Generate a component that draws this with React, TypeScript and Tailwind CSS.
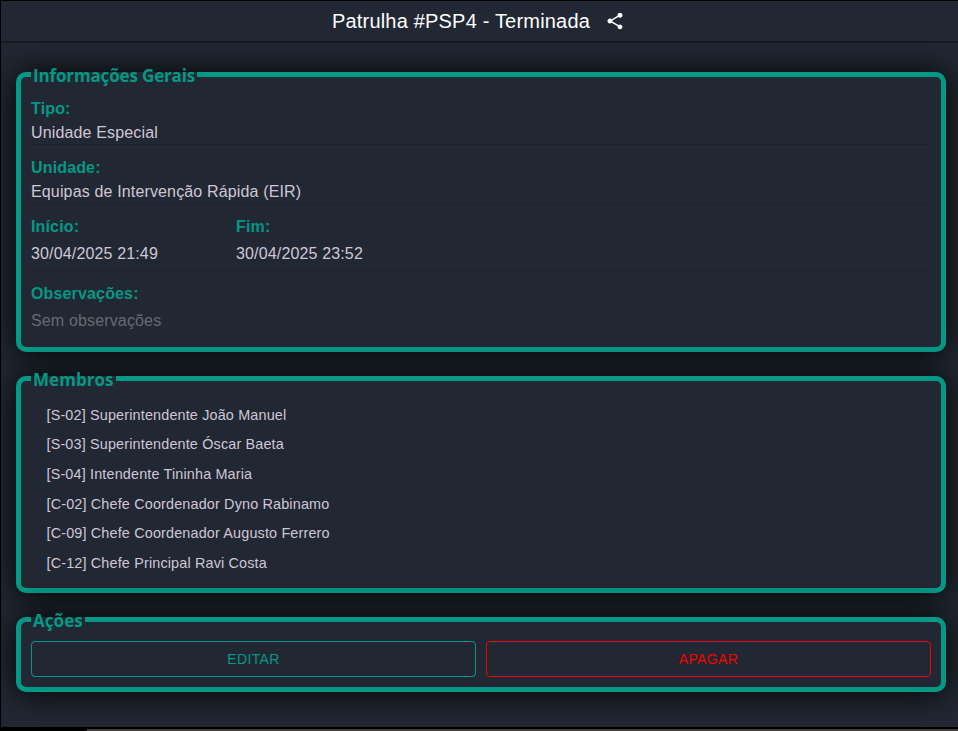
import type { ReactNode } from "react";

const members = [
  "[S-02] Superintendente João Manuel",
  "[S-03] Superintendente Óscar Baeta",
  "[S-04] Intendente Tininha Maria",
  "[C-02] Chefe Coordenador Dyno Rabinamo",
  "[C-09] Chefe Coordenador Augusto Ferrero",
  "[C-12] Chefe Principal Ravi Costa",
];

type PanelProps = { title: string; height: string; tracking: string; children: ReactNode };

function Panel({ title, height, tracking, children }: PanelProps) {
  return (
    <fieldset
      className={`${height} min-w-0 rounded-[10px] border-[5px] border-[#049985] bg-[#212833] px-[10px] shadow-[0_1px_32px_rgba(0,0,0,1)]`}
    >
      <legend
        className={`${tracking} h-[25px] px-[2px] font-['Open_Sans',sans-serif] text-[17px] leading-[28px] font-bold whitespace-nowrap text-[#049985]`}
      >
        {title}
      </legend>
      {children}
    </fieldset>
  );
}

function Label({ children }: { children: ReactNode }) {
  return <div className="h-6 text-base leading-6 font-bold tracking-[0.15px] text-[#049985]">{children}</div>;
}

export default function App() {
  return (
    <div className="flex h-[731px] w-[958px] flex-col overflow-hidden bg-black pt-px pl-px font-['Liberation_Sans',Arial,sans-serif] text-[#d0c6d6]">
      <div className="flex h-[726px] flex-col bg-[#212833]">
        <header className="flex h-[42px] shrink-0 items-center justify-center border-b-2 border-[#171c24] bg-[#212833] text-white">
          <h1 className="text-xl leading-[30px] tracking-[0.19px]">Patrulha #PSP4 - Terminada</h1>
          <svg viewBox="0 0 24 24" className="mr-[2px] ml-[15px] size-5" fill="currentColor">
            <path d="M18 16.08c-.76 0-1.44.3-1.96.77L8.91 12.7c.05-.23.09-.46.09-.7s-.04-.47-.09-.7l7.05-4.11c.54.5 1.25.81 2.04.81 1.66 0 3-1.34 3-3s-1.34-3-3-3-3 1.34-3 3c0 .24.04.47.09.7L8.04 9.81C7.5 9.31 6.79 9 6 9c-1.66 0-3 1.34-3 3s1.34 3 3 3c.79 0 1.5-.31 2.04-.81l7.12 4.16c-.05.21-.08.43-.08.65 0 1.61 1.31 2.92 2.92 2.92s2.92-1.31 2.92-2.92-1.31-2.92-2.92-2.92" />
          </svg>
        </header>
        <main className="flex flex-col gap-[14px] pt-[19px] pr-3 pl-[15px]">
          <Panel title="Informações Gerais" height="h-[290px]" tracking="tracking-[-0.15px]">
            <div className="mt-[10px] h-12 border-b border-[#1c212a]">
              <Label>Tipo:</Label>
              <div className="leading-6 tracking-[0.15px]">Unidade Especial</div>
            </div>
            <div className="mt-[11px] h-12 border-b border-[#1c212a]">
              <Label>Unidade:</Label>
              <div className="leading-6 tracking-[0.15px]">Equipas de Intervenção Rápida (EIR)</div>
            </div>
            <div className="mt-[11px] flex h-14 border-b border-[#1c212a]">
              <div className="w-[205px]">
                <Label>Início:</Label>
                <div className="mt-[3px] leading-6 tracking-[0.15px]">30/04/2025 21:49</div>
              </div>
              <div>
                <Label>Fim:</Label>
                <div className="mt-[3px] leading-6 tracking-[0.15px]">30/04/2025 23:52</div>
              </div>
            </div>
            <div className="mt-[11px]">
              <Label>Observações:</Label>
              <div className="mt-[3px] leading-6 tracking-[0.15px] text-[#696875]">Sem observações</div>
            </div>
          </Panel>
          <Panel title="Membros" height="h-[227px]" tracking="tracking-[0.05px]">
            <ul className="mt-[9.75px] ml-[15.5px]">
              {members.map((member) => (
                <li key={member} className="h-[29.6px] text-[14.4px] leading-[29.6px] tracking-[0.16px]">
                  {member}
                </li>
              ))}
            </ul>
          </Panel>
          <Panel title="Ações" height="h-[85px]" tracking="tracking-[0.05px]">
            <div className="mt-[9px] flex gap-[10px] text-sm tracking-[0.4px]">
              <button className="h-9 flex-1 rounded border border-[#049985] text-[#049985]">EDITAR</button>
              <button className="h-9 flex-1 rounded border border-[#f50000] text-[#f50000]">APAGAR</button>
            </div>
          </Panel>
        </main>
      </div>
      <div className="mt-[2px] ml-[86px] h-[2px] bg-[#454040]" />
    </div>
  );
}
